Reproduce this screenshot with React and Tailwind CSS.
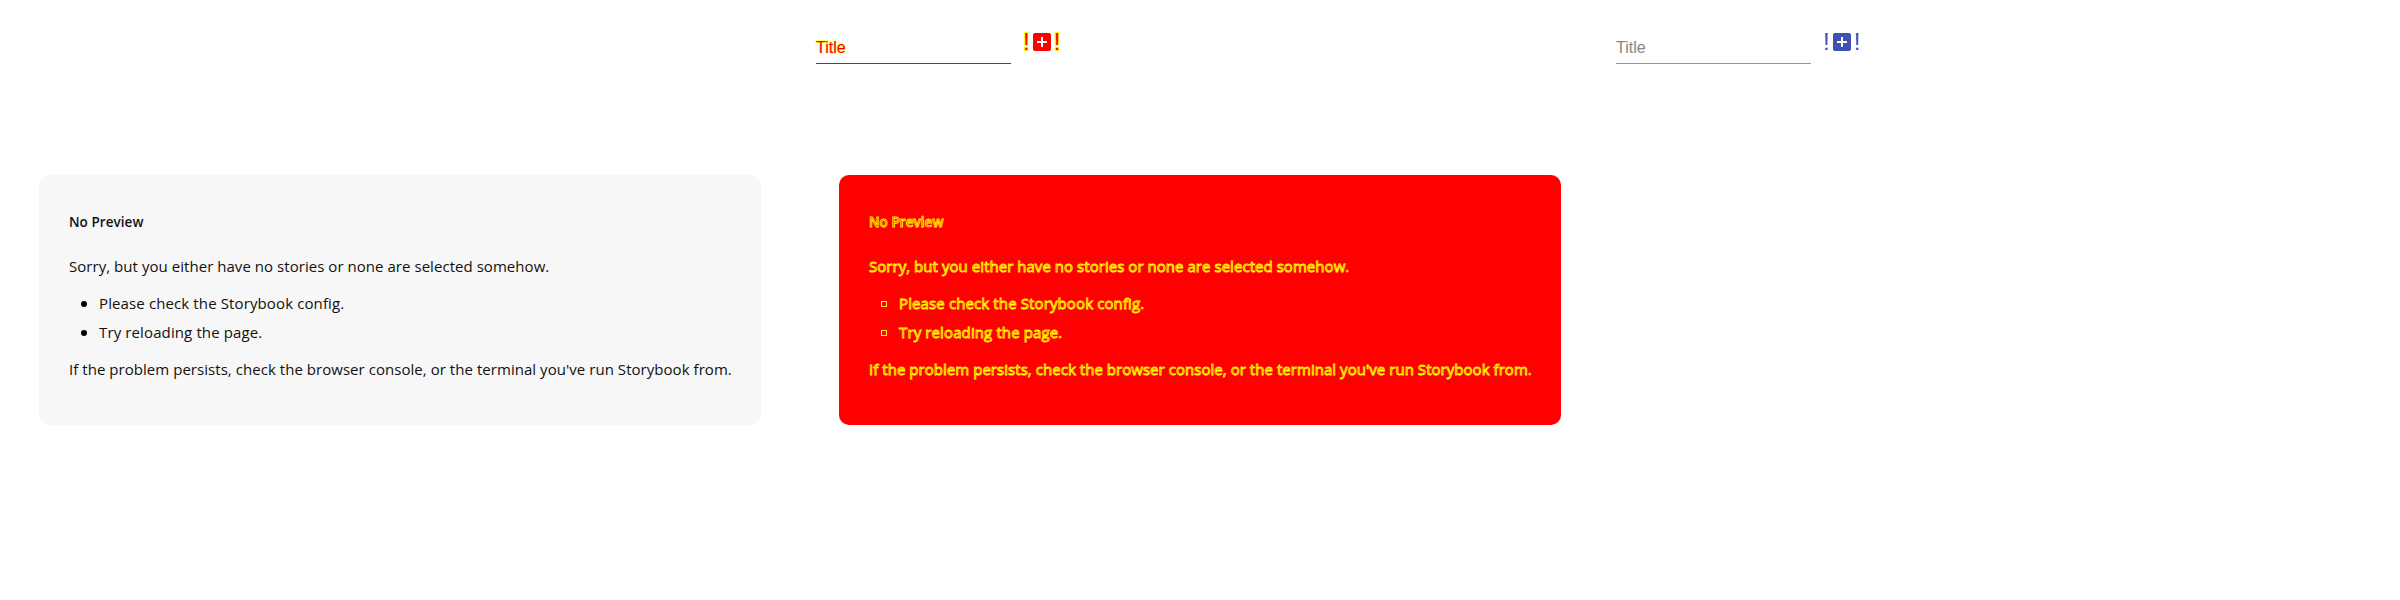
function NoPreview({ diff }) {
  return (
    <section
      className={
        "mt-[175px] ml-[39px] h-[250px] w-[722px] rounded-[10px] px-[30px] pt-[37px] font-['Open_Sans',sans-serif] whitespace-nowrap " +
        (diff
          ? "bg-[#ff0000] text-[#ff0000] [-webkit-text-stroke:0.85px_#ffff00]"
          : "bg-[#f7f7f7] text-[#111111]")
      }
    >
      <h1 className="text-[13.5px] leading-5 font-semibold tracking-[0.05px]">No Preview</h1>
      <div className="mt-5 text-[15px] leading-[29px] tracking-[0.045px]">
        <p>Sorry, but you either have no stories or none are selected somehow.</p>
        <ul className="my-2 tracking-[0.12px]">
          {["Please check the Storybook config.", "Try reloading the page."].map((t) => (
            <li key={t} className="flex items-center pl-3">
              <span
                className={
                  "mr-3 h-1.5 w-1.5 shrink-0 " +
                  (diff ? "border border-[#ffff00]" : "rounded-full bg-black")
                }
              />
              <span>{t}</span>
            </li>
          ))}
        </ul>
        <p>
          If the problem persists, check the browser console, or the terminal you've run Storybook from.
        </p>
      </div>
    </section>
  );
}

function TitleForm({ diff }) {
  return (
    <div className="flex h-[175px] items-start pt-[30px] pl-4 font-['Liberation_Sans',Arial,sans-serif]">
      <div
        className={
          "h-[34px] w-[195px] border-b pt-2 text-base leading-[20px] " +
          (diff
            ? "border-[#ff0000] text-[#ff0000] [-webkit-text-stroke:1.2px_#ffff00] [paint-order:stroke]"
            : "border-[#949494] text-[#858585]")
        }
      >
        Title
      </div>
      <div
        className={
          "ml-3 flex h-6 items-center text-2xl leading-6 " +
          (diff
            ? "text-[#ff0000] [-webkit-text-stroke:2px_#ffff00] [paint-order:stroke]"
            : "text-[#3f51b5]")
        }
      >
        <span>!</span>
        <svg viewBox="0 0 24 24" className="h-6 w-6" fill="currentColor">
          {diff && <path fill="#ffff00" d="M3 4h1V3h2L3 6zM21 4v2l-3-3h2v1zM21 20h-1v1h-2l3-3zM3 20v-2l3 3H4v-1z" />}
          <path d="M19 3H5c-1.11 0-2 .9-2 2v14c0 1.1.89 2 2 2h14c1.1 0 2-.9 2-2V5c0-1.1-.9-2-2-2zm-2 10h-4v4h-2v-4H7v-2h4V7h2v4h4v2z" />
        </svg>
        <span>!</span>
      </div>
    </div>
  );
}

export default function App() {
  return (
    <main className="grid h-[600px] w-[2400px] grid-cols-3 overflow-hidden bg-white">
      <div>
        <NoPreview />
      </div>
      <div>
        <TitleForm diff />
        <div className="-mt-[175px] flow-root">
          <NoPreview diff />
        </div>
      </div>
      <div>
        <TitleForm />
      </div>
    </main>
  );
}
